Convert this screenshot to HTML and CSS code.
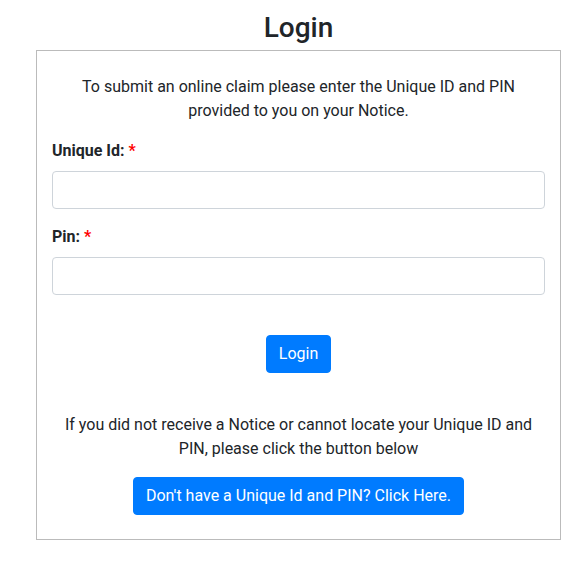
FILE: index.html
```html
<!DOCTYPE html>
<html lang="en">
<head>
<meta charset="utf-8">
<title>Login</title>
<link rel="stylesheet" href="styles.css">
</head>
<body>
<main class="page">
  <h3 class="title">Login</h3>
  <div class="card">
    <p class="intro">To submit an online claim please enter the Unique ID and PIN<br>provided to you on your Notice.</p>
    <form class="form">
      <div class="form-group">
        <label class="label" for="uid">Unique Id: <span class="req">*</span></label>
        <input class="input" id="uid" type="text">
      </div>
      <div class="form-group">
        <label class="label" for="pin">Pin: <span class="req">*</span></label>
        <input class="input" id="pin" type="password">
      </div>
      <div class="actions form-actions">
        <button type="button" class="btn">Login</button>
      </div>
    </form>
    <p class="help">If you did not receive a Notice or cannot locate your Unique ID and<br>PIN, please click the button below</p>
    <div class="actions">
      <button type="button" class="btn">Don't have a Unique Id and PIN? Click Here.</button>
    </div>
  </div>
</main>
</body>
</html>
```
FILE: styles.css
```css
*{box-sizing:border-box}
html,body{margin:0;padding:0;background:#fff}
body{
  font-family:Roboto,"Liberation Sans",sans-serif;
  font-size:16px;
  line-height:24px;
  color:#212529;
}
.page{
  width:525px;
  margin-left:36px;
  padding-top:11px;
}
.title{
  margin:0 0 5px;
  font-size:28px;
  line-height:34px;
  font-weight:500;
  text-align:center;
}
.card{
  border:1px solid #bbb;
  padding:24px 15px 24px;
  height:490px;
}
.intro{
  margin:0 0 16px;
  text-align:center;
}
.form{margin:0}
.form-group{margin-bottom:16px}
.label{
  display:block;
  font-weight:700;
  margin-bottom:8px;
}
.req{color:#f00}
.input{
  display:block;
  width:100%;
  height:38px;
  padding:6px 12px;
  font:inherit;
  color:#495057;
  background:#fff;
  border:1px solid #ced4da;
  border-radius:4px;
}
.actions{text-align:center}
.form-actions{margin-top:40px}
.btn{
  display:inline-block;
  height:38px;
  padding:6px 12px;
  font:inherit;
  line-height:24px;
  color:#fff;
  background:#007bff;
  border:1px solid #007bff;
  border-radius:4px;
  cursor:pointer;
}
.help{
  margin:40px 0 16px;
  text-align:center;
}
```
